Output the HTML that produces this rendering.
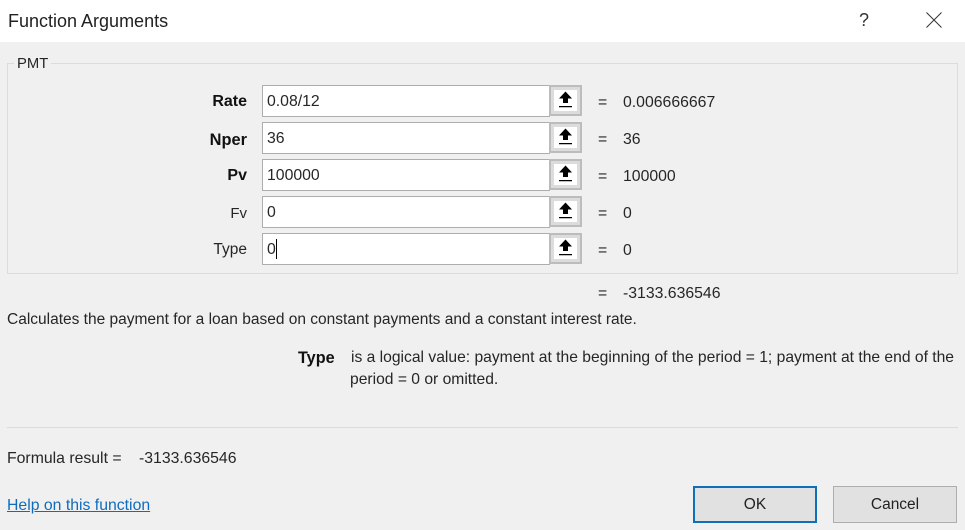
<!DOCTYPE html>
<html><head><meta charset="utf-8"><style>
html,body{margin:0;padding:0}
body{width:965px;height:530px;position:relative;overflow:hidden;background:#f0f0f0;font-family:"Liberation Sans",sans-serif;font-size:15.800px;color:#262626}
.t{position:absolute;white-space:nowrap;line-height:18px}
.r{position:absolute;right:718px;white-space:nowrap;line-height:18px;text-align:right}
.b{font-weight:bold;color:#111}
.box{position:absolute;left:262px;width:286px;height:30px;border:1px solid #adadad;background:#fff}
.btn{position:absolute;left:549px;width:33px;height:31px;box-sizing:border-box;border:2px solid #bcbcbc;background:#dcdcdc}
.btn i{position:absolute;left:3px;top:3px;width:23px;height:21px;background:#fff}
.btn svg{position:absolute;left:3px;top:2px}
.a{position:absolute;box-sizing:border-box;text-align:center}
</style></head><body>
<div style="position:absolute;left:0;top:0;width:965px;height:42px;background:#fff"></div>
<div class="t" style="left:8px;top:11px;font-size:18px;line-height:20px;color:#222">Function Arguments</div>
<div class="t" style="left:859px;top:10px;font-size:18px;line-height:20px;color:#333">?</div>
<svg style="position:absolute;left:925px;top:11px" width="18" height="18"><path d="M1.500 1.500L16.500 16.500M16.500 1.500L1.500 16.500" stroke="#333" stroke-width="1" fill="none"/></svg>

<div style="position:absolute;left:7px;top:63px;width:949px;height:209px;border:1px solid #dcdcdc"></div>
<div class="t" style="left:14px;top:55px;background:#f0f0f0;padding:0 3px;font-size:14.800px">PMT</div>

<div class="r b" style="top:93px;font-size:16px">Rate</div>
<div class="r b" style="top:131px;font-size:16.400px">Nper</div>
<div class="r b" style="top:167px;font-size:16px">Pv</div>
<div class="r" style="top:205px;font-size:15px">Fv</div>
<div class="r" style="top:241px;font-size:15.500px">Type</div>

<div class="box" style="top:85px"></div>
<div class="box" style="top:122px"></div>
<div class="box" style="top:159px"></div>
<div class="box" style="top:196px"></div>
<div class="box" style="top:233px"></div>

<div class="t" style="left:267px;top:93px">0.08/12</div>
<div class="t" style="left:267px;top:130px">36</div>
<div class="t" style="left:267px;top:167px">100000</div>
<div class="t" style="left:267px;top:204px">0</div>
<div class="t" style="left:267px;top:241px">0</div>
<div style="position:absolute;left:276px;top:239px;width:1px;height:20px;background:#000"></div>

<div class="btn" style="top:85px"><i></i><svg width="23" height="21"><path d="M11.500 2.500L18 9.500H14V14H9V9.500H5Z M5 17H18V18.200H5Z" fill="#000"/></svg></div>
<div class="btn" style="top:122px"><i></i><svg width="23" height="21"><path d="M11.500 2.500L18 9.500H14V14H9V9.500H5Z M5 17H18V18.200H5Z" fill="#000"/></svg></div>
<div class="btn" style="top:159px"><i></i><svg width="23" height="21"><path d="M11.500 2.500L18 9.500H14V14H9V9.500H5Z M5 17H18V18.200H5Z" fill="#000"/></svg></div>
<div class="btn" style="top:196px"><i></i><svg width="23" height="21"><path d="M11.500 2.500L18 9.500H14V14H9V9.500H5Z M5 17H18V18.200H5Z" fill="#000"/></svg></div>
<div class="btn" style="top:233px"><i></i><svg width="23" height="21"><path d="M11.500 2.500L18 9.500H14V14H9V9.500H5Z M5 17H18V18.200H5Z" fill="#000"/></svg></div>

<div class="t" style="left:598px;top:94px">=</div><div class="t" style="left:623px;top:94px">0.006666667</div>
<div class="t" style="left:598px;top:131px">=</div><div class="t" style="left:623px;top:131px">36</div>
<div class="t" style="left:598px;top:168px">=</div><div class="t" style="left:623px;top:168px">100000</div>
<div class="t" style="left:598px;top:205px">=</div><div class="t" style="left:623px;top:205px">0</div>
<div class="t" style="left:598px;top:242px">=</div><div class="t" style="left:623px;top:242px">0</div>
<div class="t" style="left:598px;top:285px">=</div><div class="t" style="left:623px;top:285px">-3133.636546</div>

<div class="t" style="left:7px;top:311px;font-size:15.500px">Calculates the payment for a loan based on constant payments and a constant interest rate.</div>
<div class="t b" style="left:298px;top:349px;font-size:16.200px">Type</div>
<div class="t" style="left:351px;top:349px;font-size:15.650px">is a logical value: payment at the beginning of the period = 1; payment at the end of the</div>
<div class="t" style="left:350px;top:371px;font-size:15.650px">period = 0 or omitted.</div>

<div style="position:absolute;left:7px;top:427px;width:951px;height:1px;background:#dcdcdc"></div>
<div class="t" style="left:7px;top:450px">Formula result =</div>
<div class="t" style="left:139px;top:450px">-3133.636546</div>
<div class="t" style="left:7px;top:497px;color:#0f6cbd;text-decoration:underline">Help on this function</div>

<div class="a" style="left:693px;top:486px;width:124px;height:37px;border:2px solid #0f6fb8;background:#e1e1e1;line-height:34px;font-size:15.500px;color:#222">OK</div>
<div class="a" style="left:833px;top:486px;width:124px;height:37px;border:1px solid #adadad;background:#e1e1e1;line-height:35px;font-size:15.500px;color:#222">Cancel</div>
</body></html>
